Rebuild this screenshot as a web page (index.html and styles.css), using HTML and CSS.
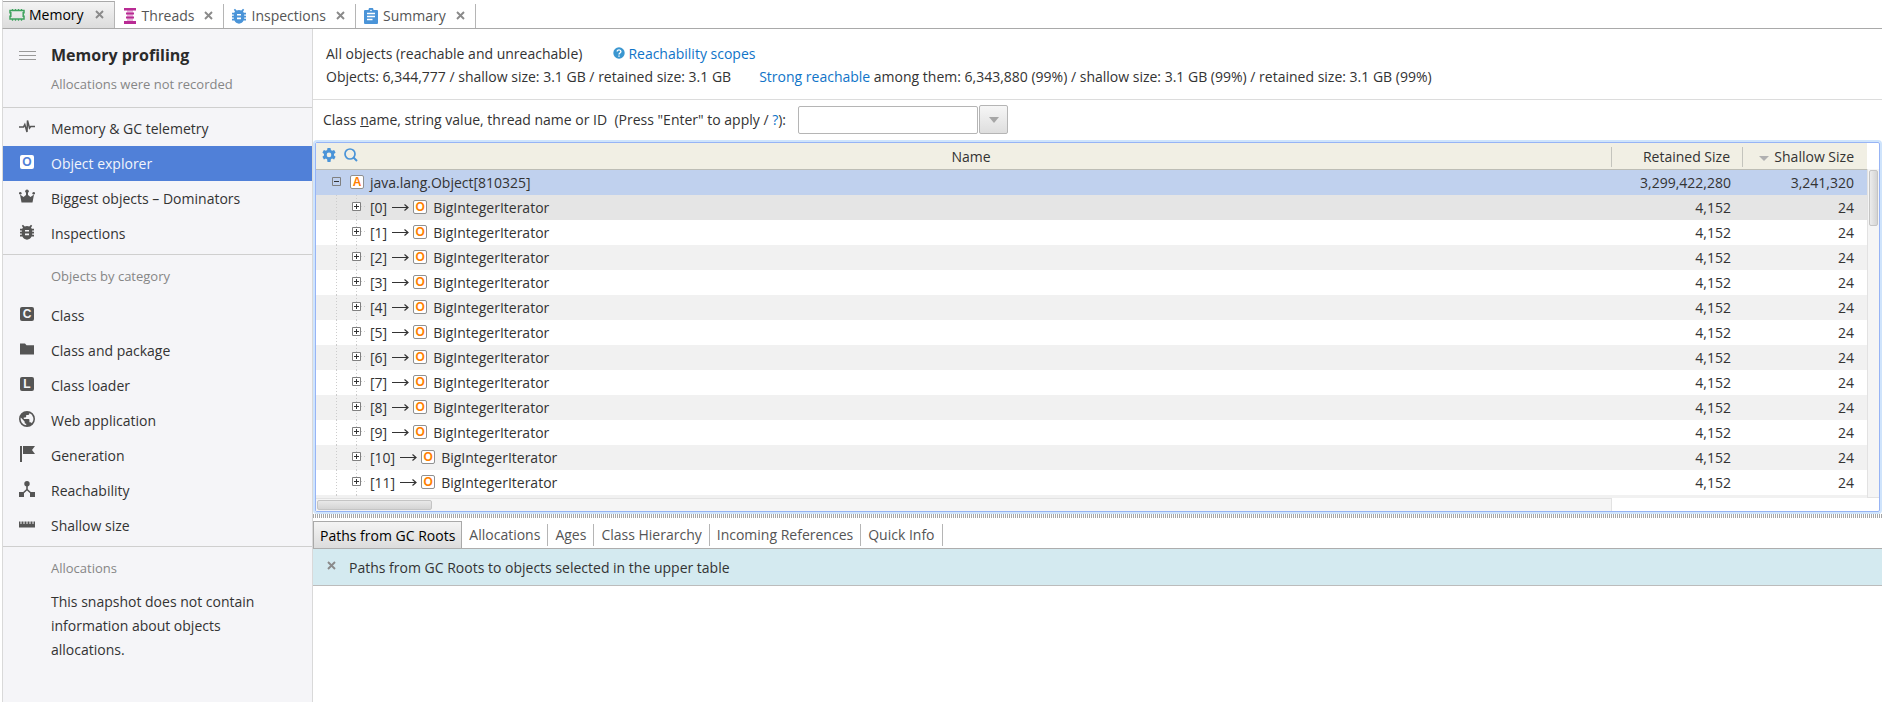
FILE: index.html
```
<!DOCTYPE html>
<html lang="en">
<head>
<meta charset="utf-8">
<title>Memory profiling</title>
<link rel="stylesheet" href="styles.css">
</head>
<body>
<svg class="defs" aria-hidden="true">
  <symbol id="bug" viewBox="0 0 16 16"><path d="M4 3.4 2.8 1.8 4 .8l1.7 1.8a5 5 0 0 1 4.600 0L12 .8l1.200 1L12 3.400l.8 1.400H15v1.800h-1.800v1.200H15v1.800h-1.800v1.200H15v1.800h-2.400a5 5 0 0 1-9.200 0H1v-1.800h1.800V9.600H1V7.800h1.800V6.600H1V4.800h2.200zM6 6v1.600h4V6zm0 3.600v1.600h4V9.600z" fill="currentColor" fill-rule="evenodd"/></symbol>
  <symbol id="x" viewBox="0 0 9 9"><path d="M1 1l7 7M8 1 1 8" stroke="currentColor" stroke-width="1.900"/></symbol>
  <symbol id="plus" viewBox="0 0 9 9"><path d="M.5.5h8v8h-8z" fill="#fff" stroke="#808080"/><path d="M2 4.500h5M4.500 2v5" stroke="#333"/></symbol>
  <symbol id="minus" viewBox="0 0 9 9"><path d="M.5.5h8v8h-8z" fill="none" stroke="#808080"/><path d="M2 4.500h5" stroke="#333"/></symbol>
  <symbol id="arrow" viewBox="0 0 17 9"><path d="M0 4.500h16M12.500 1.500l3.500 3-3.500 3" fill="none" stroke="#333" stroke-width="1.200"/></symbol>
</svg>

<nav class="tabs">
  <div class="tab active"><svg class="i16" viewBox="0 0 16 16"><path d="M1 3.500h14v2.300h-.8v3.400h.8v2.800H1V9.200h.8V5.800H1z" fill="none" stroke="#3fa35e" stroke-width="1.500"/><path d="M3.500 2v1.500M6.500 2v1.500M9.500 2v1.500M12.500 2v1.500M3.500 12v1.700M6.500 12v1.700M9.500 12v1.700M12.500 12v1.700" stroke="#3fa35e" stroke-width="1.300"/></svg><button class="name">Memory</button><button class="close" aria-label="Close Memory"><svg><use href="#x"/></svg></button></div>
  <div class="tab"><svg class="i16" viewBox="0 0 16 16"><path d="M2 0h12v2.500H2zM4 4.500h8v2H4zM4 8.500h8v2H4zM2 13h12v3H2z" fill="#b92b94"/><path d="M5 2h6v12H5z" fill="#b92b94" opacity=".35"/></svg><button class="name">Threads</button><button class="close" aria-label="Close Threads"><svg><use href="#x"/></svg></button></div>
  <div class="tab"><svg class="i16 blue"><use href="#bug"/></svg><button class="name">Inspections</button><button class="close" aria-label="Close Inspections"><svg><use href="#x"/></svg></button></div>
  <div class="tab"><svg class="i16" viewBox="0 0 16 16"><path d="M2 2h3.500a2.500 2.500 0 0 1 5 0H14a1 1 0 0 1 1 1v12a1 1 0 0 1-1 1H2a1 1 0 0 1-1-1V3a1 1 0 0 1 1-1z" fill="#4a94d8"/><path d="M4 5.500h8M4 8.500h8M4 11.500h5.500" stroke="#fff" stroke-width="1.400"/><circle cx="8" cy="2.500" r=".8" fill="#fff"/></svg><button class="name">Summary</button><button class="close" aria-label="Close Summary"><svg><use href="#x"/></svg></button></div>
</nav>

<div class="body">
  <aside class="side">
    <header class="sidehead">
      <button class="menu" aria-label="Menu"><svg viewBox="0 0 17 11"><path d="M0 1.500h17M0 5.500h17M0 9.500h17" stroke="#999"/></svg></button>
      <div><h1>Memory profiling</h1><p class="muted">Allocations were not recorded</p></div>
    </header>
    <ul class="menu-list">
      <li><a href="#"><svg class="i16" viewBox="0 0 16 16"><path d="M0 8h4.500l1.300-2.500L8 13 8.500 1.500 10.500 9l1.200-1.500H16" fill="none" stroke="currentColor" stroke-width="1.500"/></svg>Memory &amp; GC telemetry</a></li>
      <li><a href="#" class="current"><span class="i16"><b class="letter">O</b></span>Object explorer</a></li>
      <li><a href="#"><svg class="i16" viewBox="0 0 16 16"><path d="M2.500 13.500 1 5.500l3.500 2.500L7 6V3h2v3l2.500 2L15 5.500l-1.500 8z" fill="currentColor"/><circle cx="1.300" cy="4.300" r="1.300" fill="currentColor"/><circle cx="14.700" cy="4.300" r="1.300" fill="currentColor"/><circle cx="8" cy="2.300" r="1.800" fill="currentColor"/></svg>Biggest objects – Dominators</a></li>
      <li><a href="#"><svg class="i16"><use href="#bug"/></svg>Inspections</a></li>
    </ul>
    <p class="muted group">Objects by category</p>
    <ul class="menu-list cats">
      <li><a href="#"><span class="i16"><b class="letter">C</b></span>Class</a></li>
      <li><a href="#"><svg class="i16" viewBox="0 0 16 16"><path d="M1 2.500h5l1.500 1.700H15v9.300H1z" fill="currentColor"/></svg>Class and package</a></li>
      <li><a href="#"><span class="i16"><b class="letter">L</b></span>Class loader</a></li>
      <li><a href="#"><svg class="i16" viewBox="0 0 24 24"><path d="M12 0a12 12 0 1 0 0 24 12 12 0 0 0 0-24zm-1.200 21.500A9.600 9.600 0 0 1 2.700 9.900l5.700 5.700v1.200a2.400 2.400 0 0 0 2.400 2.400zm8.300-3.100a2.400 2.400 0 0 0-2.300-1.600h-1.200v-3.600a1.200 1.200 0 0 0-1.200-1.200H7.200V9.600h2.400a1.200 1.200 0 0 0 1.200-1.200V6h2.400a2.400 2.400 0 0 0 2.400-2.400v-.5a9.600 9.600 0 0 1 3.500 15.300z" fill="currentColor"/></svg>Web application</a></li>
      <li><a href="#"><svg class="i16" viewBox="0 0 16 16"><path d="M1 0h2v16H1zM4 0h12l-3 4 3 4H4z" fill="currentColor"/></svg>Generation</a></li>
      <li><a href="#"><svg class="i16" viewBox="0 0 16 16"><circle cx="8" cy="2.700" r="2.700" fill="currentColor"/><path d="M8 3v5.500l-5.500 5M8 8.500l5.500 5" fill="none" stroke="currentColor" stroke-width="1.600"/><path d="M0 11h5v5H0zM11 11h5v5h-5z" fill="currentColor"/></svg>Reachability</a></li>
      <li><a href="#"><svg class="i16" viewBox="0 0 16 16"><path d="M0 5.500h1.500v2.500h1V5.500h2v2.500h1V5.500h2v2.500h1V5.500h2v2.500h1V5.500h2v2.500h1V5.500H16v6H0z" fill="currentColor"/></svg>Shallow size</a></li>
    </ul>
    <p class="muted group">Allocations</p>
    <p class="note">This snapshot does not contain information about objects allocations.</p>
  </aside>

  <main class="main">
    <section class="summary">
      <p>All objects (reachable and unreachable)<a href="#" class="help"><svg viewBox="0 0 12 12"><circle cx="6" cy="6" r="5.700" fill="#3a96d0"/><path d="M4.200 4.600c0-2.400 3.700-2.300 3.700 0C7.900 6 6 6 6 7.400M6 8.400v1.400" fill="none" stroke="#fff" stroke-width="1.400"/></svg>Reachability scopes</a></p>
      <p>Objects: 6,344,777 / shallow size: 3.1 GB / retained size: 3.1 GB<a href="#" class="strong">Strong reachable</a> among them: 6,343,880 (99%) / shallow size: 3.1 GB (99%) / retained size: 3.1 GB (99%)</p>
    </section>
    <form class="filter">
      <label for="q">Class <u>n</u>ame, string value, thread name or ID&nbsp; (Press "Enter" to apply / <a href="#">?</a>):</label>
      <input id="q" type="text"><button type="button" aria-label="History"><svg viewBox="0 0 10 6"><path d="M0 0h10L5 6z" fill="#a6a6a6"/></svg></button>
    </form>
    <section class="grid">
      <div class="view">
        <table>
          <colgroup><col><col class="c-ret"><col class="c-sh"></colgroup>
          <thead><tr>
            <th><div class="namehead"><svg class="gear" viewBox="0 0 14 14"><path d="M5.500 0h3l.4 2.100 1.200.7 2-.8 1.500 2.600-1.600 1.300v1.600l1.600 1.300-1.500 2.600-2-.8-1.200.7L8.500 14h-3l-.4-2.700-1.200-.7-2 .8L.4 8.800 2 7.500V5.900L.4 4.600 1.900 2l2 .8 1.200-.7zM7 4.600a2.300 2.300 0 1 0 0 4.600 2.300 2.300 0 0 0 0-4.600z" fill="#4a94d8" fill-rule="evenodd"/></svg><svg class="gear" viewBox="0 0 14 14"><circle cx="6" cy="6" r="5" fill="none" stroke="#4a94d8" stroke-width="1.700"/><path d="M9.500 9.500 13 13" stroke="#4a94d8" stroke-width="2"/></svg><span>Name</span></div></th>
            <th>Retained Size</th>
            <th><svg class="sort" viewBox="0 0 10 5"><path d="M0 0h10L5 5z" fill="#b0b0b0"/></svg>Shallow Size</th>
          </tr></thead>
          <tbody id="rows">
            <tr class="sel"><td><div class="root"><svg class="box"><use href="#minus"/></svg><b class="badge">A</b><span>java.lang.Object[810325]</span></div></td><td>3,299,422,280</td><td>3,241,320</td></tr>
          </tbody>
        </table>
        <div class="vbar"><i></i></div>
      </div>
      <div class="hbar"><div><i></i></div></div>
    </section>
    <div class="split"></div>
    <section class="lower">
      <nav class="subtabs"><button class="on">Paths from GC Roots</button><button>Allocations</button><button>Ages</button><button>Class Hierarchy</button><button>Incoming References</button><button>Quick Info</button></nav>
      <div class="banner"><button class="close" aria-label="Close"><svg><use href="#x"/></svg></button>Paths from GC Roots to objects selected in the upper table</div>
    </section>
  </main>
</div>
<script src="rows.js"></script>
</body>
</html>
```
FILE: styles.css
```
* { box-sizing: border-box; }
body { margin: 0; height: 100vh; display: flex; flex-direction: column; font: 14px/20px "Open Sans", "Noto Sans", sans-serif; color: #333; background: #fff; overflow: hidden; }
p, h1, ul { margin: 0; padding: 0; }
ul { list-style: none; }
svg { display: block; flex: none; }
.defs { position: absolute; width: 0; height: 0; }
a { color: #0f74c8; text-decoration: none; }
button { font: inherit; color: inherit; background: none; border: 0; padding: 0; }
.i16 { width: 16px; height: 16px; flex: none; display: block; }
.blue { color: #4a94d8; }

.tabs { display: flex; align-items: flex-end; height: 29px; flex: none; border-bottom: 1px solid #a9a9a9; border-left: 1px solid #d9d9d9; margin-left: 2px; }
.tab { display: flex; align-items: center; height: 24px; padding: 0 10px 0 7px; border-right: 1px solid #b5b5b5; color: #555; }
.tab .name { margin-left: 4px; }
.tab .close { margin: 0 0 2px 10px; }
.tab.active { height: 27px; padding-left: 6px; border-top: 1px solid #a9a9a9; background: linear-gradient(#f4f4f4, #dcdcdc); color: #000; }
.tab.active .close { margin-left: 11px; }
.close { color: #8a8a8a; }
.close svg { width: 9px; height: 9px; }

.body { display: flex; flex: 1; min-height: 0; }
.side { width: 311px; margin-left: 2px; flex: none; border: solid #d9d9d9; border-width: 0 1px; background: #f5f5f8; }
.sidehead { display: flex; gap: 15px; height: 79px; padding: 16px 16px 0; border-bottom: 1px solid #cfcfcf; }
.menu { align-self: flex-start; padding-top: 5px; }
.menu svg { width: 17px; height: 11px; }
h1 { font-size: 16px; line-height: 20px; font-weight: 700; color: #2b2b2b; }
.muted { color: #868686; font-size: 13px; }
.sidehead .muted { margin-top: 9px; }
.menu-list { padding: 3px 0; border-bottom: 1px solid #cfcfcf; }
.menu-list a { display: flex; align-items: center; gap: 16px; height: 35px; padding: 1px 0 0 16px; color: #333; }
.menu-list .i16 { color: #555; margin-bottom: 4px; }
.menu-list .current { background: #5080d8; color: #f2f5fc; }
.letter { display: block; width: 14px; height: 14px; margin: 1px; border-radius: 2px; background: #555; color: #f5f5f8; font: bold 12px/14px "Liberation Sans", sans-serif; text-align: center; }
.current .letter { background: #fff; color: #5080d8; }
.group { padding: 11px 0 0 48px; }
.cats { padding: 12px 0 3px; }
.note { padding: 12px 30px 0 48px; line-height: 24px; }

.main { flex: 1; min-width: 0; display: flex; flex-direction: column; }
.summary { padding: 13px 13px 11px; line-height: 23px; border-bottom: 1px solid #dcdcdc; }
.help { margin-left: 31px; }
.help svg { display: inline-block; width: 12px; height: 12px; margin-right: 3px; }
.strong { margin-left: 28px; }
.filter { display: flex; align-items: center; height: 39px; padding: 0 10px; flex: none; }
.filter label { padding-top: 1px; }
.filter input { width: 180px; height: 28px; margin-left: 12px; border: 1px solid #b5b5b5; border-radius: 2px; font: inherit; }
.filter button { width: 29px; height: 29px; display: grid; place-items: center; border: 1px solid #b5b5b5; border-radius: 2px; background: linear-gradient(#f6f6f6, #dedede); margin-left: 1px; }
.filter button svg { width: 10px; height: 6px; }

.grid { flex: 1; min-height: 0; display: flex; flex-direction: column; margin: 3px 2px 2px; border: 1px solid #97b4f5; border-radius: 2px; box-shadow: 0 0 0 2px #cfe4fc; }
.view { flex: 1; min-height: 0; overflow: hidden; display: flex; align-items: stretch; }
table { flex: 1; table-layout: fixed; border-collapse: separate; border-spacing: 0; align-self: flex-start; }
.c-ret { width: 131px; }
.c-sh { width: 124px; }
th { height: 27px; padding: 1px 13px 0 0; font-weight: 400; text-align: right; background: linear-gradient(#c4c4bd, #c4c4bd) right 4px / 1px 20px no-repeat #f1efe4; border-bottom: 1px solid #bdbdb5; }
th:first-child { padding: 0; }
th:last-child { background: #f1efe4; }
.namehead { display: flex; align-items: center; gap: 8px; padding-left: 6px; }
.namehead span { flex: 1; text-align: center; padding: 1px 36px 0 0; }
.gear { width: 14px; height: 14px; margin-bottom: 3px; }
.sort { display: inline-block; width: 10px; height: 5px; margin-right: 5px; vertical-align: 1px; }
td { height: 25px; padding: 0 13px 0 0; text-align: right; }
td:nth-child(2) { padding-right: 12px; }
tr:nth-child(even) td { background-color: #f1f1f1; }
tr:nth-child(2) td { background-color: #e5e5e5; }
tr.sel td { background: #c0d1ee; }
td:first-child { padding: 0; }
td > div { display: flex; align-items: center; height: 25px; }
.box { width: 9px; height: 9px; margin-bottom: 2px; }
.root { padding-left: 16px; }
.root .badge { margin-left: 9px; }
.root span { margin-left: 6px; }
.kid { padding-left: 36px; background: repeating-linear-gradient(#ccc 0 1px, transparent 1px 3px) 20px 0 / 1px 100% no-repeat, repeating-linear-gradient(#ccc 0 1px, transparent 1px 3px) 40px 0 / 1px 100% no-repeat, repeating-linear-gradient(90deg, #ccc 0 1px, transparent 1px 3px) 45px 11px / 6px 1px no-repeat; }
.kid .idx { margin-left: 9px; }
.kid .arrow { width: 17px; height: 9px; margin: 0 4px 0 5px; }
.kid .cls { margin-left: 6px; }
.badge { width: 14px; height: 14px; border: 1px solid #909090; border-radius: 2px; background: #fff; color: #ff8000; font: bold 12px/12px "Liberation Sans", sans-serif; text-align: center; margin-bottom: 2px; }
.vbar { width: 12px; flex: none; margin-top: 26px; padding: 1px; border: solid #e2e2e2; border-width: 0 0 1px 1px; background: #f5f5f5; }
.vbar i { display: block; height: 56px; border: 1px solid #c4c4c4; border-radius: 2px; background: linear-gradient(90deg, #ececec, #d4d4d4); }
.hbar { height: 13px; flex: none; padding-right: 267px; }
.hbar div { height: 13px; padding: 1px; border: solid #e2e2e2; border-width: 1px 1px 0 0; background: #f5f5f5; }
.hbar i { display: block; width: 115px; height: 10px; border: 1px solid #c4c4c4; border-radius: 2px; background: linear-gradient(#e8e8e8, #d4d4d4); }

.split { height: 4px; flex: none; background: repeating-linear-gradient(90deg, #a6a6a6 0 1px, #fff 1px 2px); }
.lower { height: 184px; flex: none; padding-top: 3px; }
.subtabs { display: flex; align-items: flex-end; height: 28px; border-bottom: 1px solid #adadad; }
.subtabs button { height: 22px; margin-bottom: 2px; padding: 0 7px; border-right: 1px solid #b5b5b5; color: #555; }
.subtabs .on { height: 27px; margin: 0; padding: 1px 6px 0; border: 1px solid #a9a9a9; border-bottom: 0; background: linear-gradient(#f4f4f4, #dcdcdc); color: #000; }
.banner { display: flex; align-items: center; gap: 13px; height: 37px; padding: 1px 0 0 14px; background: #d4eaf0; border-bottom: 1px solid #bcbcbc; }
.banner .close { margin: 0 0 4px; }
```
FILE: rows.js
```
const body = document.getElementById("rows");
for (let i = 0; i < 12; i++) {
  body.insertAdjacentHTML("beforeend", `<tr><td><div class="kid"><svg class="box"><use href="#plus"/></svg><span class="idx">[${i}]</span><svg class="arrow"><use href="#arrow"/></svg><b class="badge">O</b><span class="cls">BigIntegerIterator</span></div></td><td>4,152</td><td>24</td></tr>`);
}
body.insertAdjacentHTML("beforeend", `<tr><td><div class="kid"></div></td><td></td><td></td></tr>`);
```
